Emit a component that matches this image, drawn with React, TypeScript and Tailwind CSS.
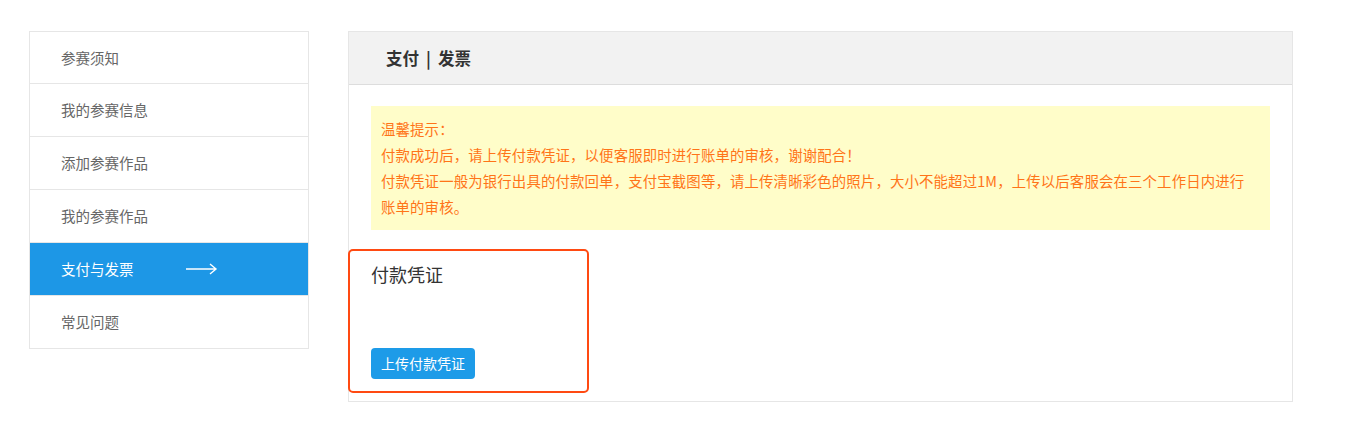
import React from "react";

const items = ["参赛须知", "我的参赛信息", "添加参赛作品", "我的参赛作品", "支付与发票", "常见问题"];

export default function App() {
  return (
    <div
      className="w-[1350px] h-[434px] bg-white flex items-start pl-[29px] pt-[31px] gap-[39px]"
      style={{ fontFamily: '"Noto Sans CJK SC", "Noto Sans", sans-serif' }}
    >
      <div className="w-[280px] border border-[#e6e6e6] flex flex-col">
        {items.map((t, i) => {
          const active = t === "支付与发票";
          return (
            <div
              key={t}
              className={
                "flex items-center pl-[31px] text-[14.5px] " +
                (i > 0 ? "h-[53px] border-t border-[#e6e6e6] " : "h-[51px] ") +
                (active ? "bg-[#1d97e6] text-white" : "text-[#666666]")
              }
            >
              <span>{t}</span>
              {active && (
                <svg width="32" height="12" viewBox="0 0 32 12" className="ml-[52px]">
                  <path d="M0 6 H30 M24 1 L30 6 L24 11" stroke="white" strokeWidth="1.4" fill="none" />
                </svg>
              )}
            </div>
          );
        })}
      </div>

      <div className="w-[945px] border border-[#e6e6e6] flex flex-col pb-[8px]">
        <div className="h-[53px] bg-[#f2f2f2] border-b border-[#dddddd] flex items-center pl-[37px]">
          <span className="text-[16.5px] font-bold text-[#333333] flex items-center">
            <span>支付</span>
            <span className="mx-[7px]">|</span>
            <span>发票</span>
          </span>
        </div>
        <div className="px-[22px] pt-[21px]">
          <div className="bg-[#fffdc9] px-[10px] py-[10px] text-[14.4px] tracking-[0.15px] leading-[26px] text-[#ff7418]">
            <div>温馨提示：</div>
            <div>付款成功后，请上传付款凭证，以便客服即时进行账单的审核，谢谢配合！</div>
            <div className="whitespace-nowrap">付款凭证一般为银行出具的付款回单，支付宝截图等，请上传清晰彩色的照片，大小不能超过1M，上传以后客服会在三个工作日内进行</div>
            <div>账单的审核。</div>
          </div>
        </div>
        <div className="relative mt-[19px] h-[144px] pl-[22px] pt-[13px] flex flex-col">
          <div className="absolute left-[-1px] top-0 w-[241px] h-[144px] border-[2.5px] border-[#ff4a12] rounded-[5px]" />
          <div className="text-[18px] leading-[24px] text-[#333333]">付款凭证</div>
          <div className="mt-[62px]">
            <button className="h-[31px] px-[10px] rounded-[4px] bg-[#1d9be8] text-white text-[14px]">
              上传付款凭证
            </button>
          </div>
        </div>
      </div>
    </div>
  );
}
